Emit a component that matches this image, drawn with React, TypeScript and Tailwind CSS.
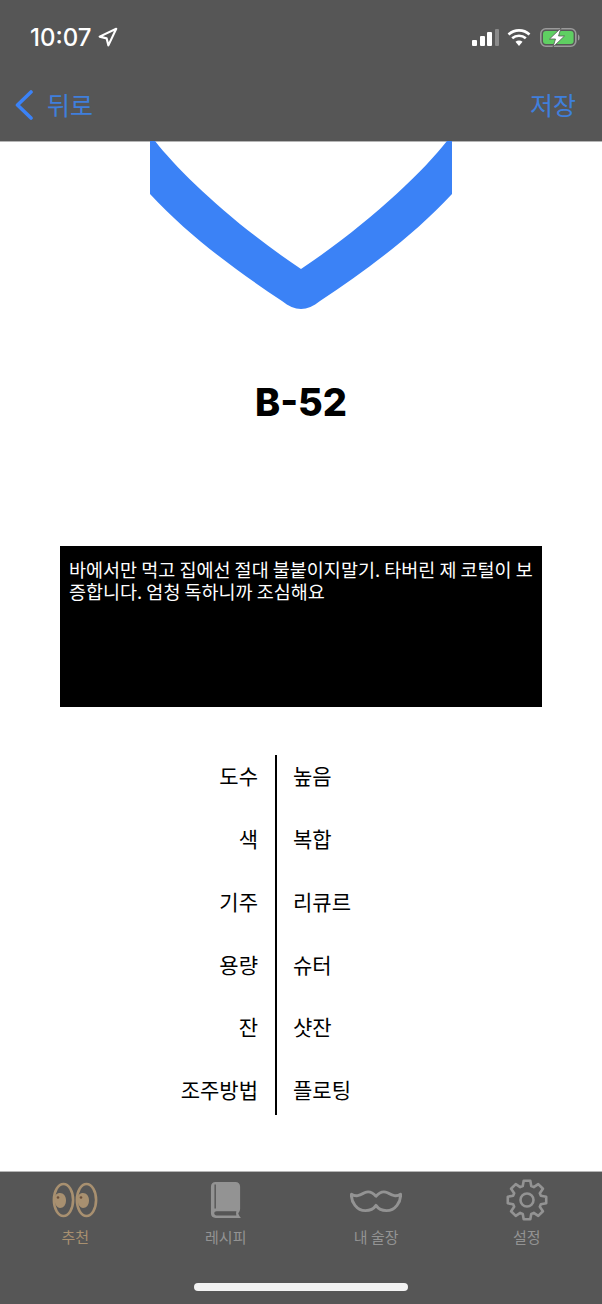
import React from "react";
import { Navigation } from "lucide-react";

const specs = [
  ["도수", "높음"],
  ["색", "복합"],
  ["기주", "리큐르"],
  ["용량", "슈터"],
  ["잔", "샷잔"],
  ["조주방법", "플로팅"],
];

const EyesIcon = () => (
  <svg width="46" height="36" viewBox="0 0 46 36" fill="none">
    <ellipse cx="11.5" cy="18" rx="9.6" ry="16" stroke="#a89070" strokeWidth="2.6" />
    <ellipse cx="34.5" cy="18" rx="9.6" ry="16" stroke="#a89070" strokeWidth="2.6" />
    <path d="M2.5 17C2.5 13 5 11 8 11C11.5 11 14 14 14 18.500C14 23 11.5 26 8 26C5 26 2.5 22 2.5 17Z" fill="#a89070" />
    <path d="M25.5 17C25.5 13 28 11 31 11C34.5 11 37 14 37 18.500C37 23 34.5 26 31 26C28 26 25.5 22 25.5 17Z" fill="#a89070" />
    <circle cx="6" cy="15.500" r="1.300" fill="#6b4f3a" />
    <circle cx="29" cy="15.500" r="1.300" fill="#6b4f3a" />
  </svg>
);

const BookIcon = () => (
  <svg width="32" height="40" viewBox="0 0 34 40" fill="none">
    <path
      d="M6 1H27C30 1 32 3 32 6V29C32 31 31 33 30 34C30.500 36 31.500 37.500 33 39H6C3 39 1 37 1 34V6C1 3 3 1 6 1Z"
      fill="#939393"
    />
    <path d="M5.500 3.500V29" stroke="#565656" strokeWidth="1.500" />
    <path d="M7 32H28C27.600 33.500 27.600 35 28 36.500H7C5.500 36.500 4.500 35.500 4.500 34.200C4.500 33 5.500 32 7 32Z" fill="#565656" />
  </svg>
);

const MustacheIcon = () => (
  <svg width="52" height="24" viewBox="0 0 54 24" fill="none" className="mt-[3px]">
    <path
      d="M27 7C23 2.500 19 1.500 15 3.500C11 5.500 6.500 8.500 1.500 5C1 13 7 22 16 22C21 22 25 19.500 27 16.500C29 19.500 33 22 38 22C47 22 53 13 52.500 5C47.500 8.500 43 5.500 39 3.500C35 1.500 31 2.500 27 7Z"
      stroke="#939393"
      strokeWidth="3"
      strokeLinejoin="round"
    />
  </svg>
);

// 8 teeth, built from the tooth angles
const gearPath = () => {
  const c = 21;
  const outer = 19.5;
  const root = 14.5;
  const points: string[] = [];
  for (let i = 0; i < 8; i++) {
    const a = (i * Math.PI) / 4 - Math.PI / 2;
    const offsets: [number, number][] = [
      [-0.3, root],
      [-0.17, outer],
      [0.17, outer],
      [0.3, root],
    ];
    offsets.forEach(([d, r]) => {
      const x = c + r * Math.cos(a + d);
      const y = c + r * Math.sin(a + d);
      points.push(`${x.toFixed(2)} ${y.toFixed(2)}`);
    });
  }
  return `M${points.join("L")}Z`;
};

const GearIcon = () => (
  <svg width="42" height="42" viewBox="0 0 42 42" fill="none">
    <path d={gearPath()} stroke="#939393" strokeWidth="2.600" strokeLinejoin="round" />
    <circle cx="21" cy="21" r="6.500" stroke="#939393" strokeWidth="2.600" />
  </svg>
);

const StatusIcons = () => (
  <div className="flex items-center">
    <div className="flex items-end gap-[2.5px] h-[17px] mr-[8px]">
      <div className="w-[5px] h-[6px] rounded-[1px] bg-white" />
      <div className="w-[5px] h-[10px] rounded-[1px] bg-white" />
      <div className="w-[5px] h-[14px] rounded-[1px] bg-white" />
      <div className="w-[4.500px] h-[17px] rounded-[1px] bg-[#8a8a8a]" />
    </div>
    <svg width="24" height="17" viewBox="0 0 24 17" fill="none" className="mr-[9px]">
      <path d="M1.500 5.500C7.500 0 16.500 0 22.500 5.500" stroke="white" strokeWidth="2.600" />
      <path d="M5.200 9.300C9 5.800 15 5.800 18.800 9.300" stroke="white" strokeWidth="2.600" />
      <path d="M12 17L8.500 12.800C10.500 11.200 13.500 11.200 15.500 12.800Z" fill="white" />
    </svg>
    <svg width="40" height="19" viewBox="0 0 40 19" fill="none">
      <rect x="0.800" y="0.800" width="35" height="17.400" rx="5" stroke="#9a9a9a" strokeWidth="1.600" />
      <rect x="3" y="3" width="30.600" height="13" rx="3" fill="#5fcf62" />
      <path d="M38 6.500C39.300 7 39.500 8 39.500 9.500C39.500 11 39.300 12 38 12.500Z" fill="#9a9a9a" />
      <path d="M21 0L9.500 11H15.500L13 19L24.500 8H18.500Z" fill="white" stroke="#565656" strokeWidth="0.800" />
    </svg>
  </div>
);

const App = () => {
  return (
    <div className="w-[602px] h-[1304px] flex flex-col bg-white font-['Noto_Sans_CJK_KR','Noto_Sans',sans-serif] overflow-hidden">
      <header className="h-[142px] shrink-0 bg-[#565656] border-b border-[#b5b5b5]">
        <div className="h-[74px] flex items-center justify-between pl-[30px] pr-[22px]">
          <div className="flex items-center gap-[6px] text-white">
            <span className="font-['Inter'] text-[24px] leading-[30px] mt-[1px] font-medium">10:07</span>
            <Navigation size={21} strokeWidth={2.400} />
          </div>
          <StatusIcons />
        </div>
        <div className="h-[62px] flex items-center justify-between pl-[15px] pr-[26px] text-[25px] text-[#3f7fdc]">
          <div className="flex items-center gap-[14px]">
            <svg width="18" height="30" viewBox="0 0 18 30" fill="none">
              <path d="M16 2L2.500 15L16 28" stroke="#3b82f6" strokeWidth="3.600" strokeLinecap="round" strokeLinejoin="round" />
            </svg>
            <span>뒤로</span>
          </div>
          <span>저장</span>
        </div>
      </header>

      <main className="flex-1 flex flex-col items-center">
        <svg width="302" height="168" viewBox="0 0 302 168" className="shrink-0 -mt-px" fill="none">
          <path
            d="M0 0H5C30 32 85 84 151 128C217 84 272 32 297 0H302V53C262 96 215 130 170 160C157 170.500 145 170.500 132 160C87 130 40 96 0 53Z"
            fill="#3b82f6"
          />
        </svg>
        <h1 className="mt-[65px] font-['Inter'] text-[38px] leading-[56px] font-extrabold text-black">B-52</h1>

        <p className="mt-[116px] w-[482px] h-[161px] bg-black pl-[9px] pr-[8px] pt-[12px] text-[18.500px] leading-[22px] text-white">
          바에서만 먹고 집에선 절대 불붙이지말기. 타버린 제 코털이 보증합니다. 엄청 독하니까 조심해요
        </p>

        <div className="mt-[48px] w-full flex flex-col gap-[17px] relative">
          <div className="absolute left-[275px] top-0 bottom-0 w-[2px] bg-black" />
          {specs.map(([label, value]) => (
            <div key={label} className="h-[45.800px] pb-[4px] flex items-center text-[21px] text-black">
              <div className="w-[258px] text-right">{label}</div>
              <div className="ml-[35px]">{value}</div>
            </div>
          ))}
        </div>
      </main>

      <footer className="h-[133px] shrink-0 bg-[#565656] border-t border-[#b5b5b5] flex flex-col">
        <div className="grid grid-cols-4 h-[111px] text-[15px] text-[#939393]">
          {[
            { label: "추천", icon: <EyesIcon />, color: "text-[#a89070]" },
            { label: "레시피", icon: <BookIcon />, color: "" },
            { label: "내 술장", icon: <MustacheIcon />, color: "" },
            { label: "설정", icon: <GearIcon />, color: "" },
          ].map((tab) => (
            <div key={tab.label} className={`flex flex-col items-center ${tab.color}`}>
              <div className="h-[55px] flex items-center justify-center">{tab.icon}</div>
              <span className="leading-[20px]">{tab.label}</span>
            </div>
          ))}
        </div>
        <div className="w-[214px] h-[8px] mx-auto rounded-full bg-[#f2f2f2]" />
      </footer>
    </div>
  );
};

export default App;
